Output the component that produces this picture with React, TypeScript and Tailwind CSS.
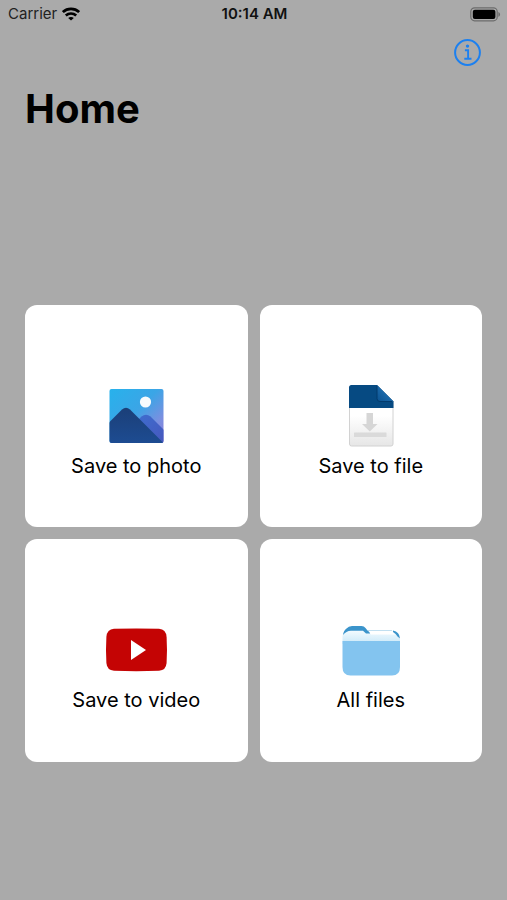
import React from 'react';

function WifiIcon() {
  return (
    <svg viewBox="0 0 18 14" className="w-[18px] h-[14px]" fill="none" stroke="#000" strokeWidth="2.7" aria-hidden="true">
      <path d="M0.9 5.1C5.4 0.9 12.6 0.9 17.1 5.1" />
      <path d="M3.8 8.5C6.8 5.8 11.2 5.8 14.2 8.5" />
      <path d="M9 13.6 6.2 10.9C7.7 9.6 10.3 9.6 11.8 10.9Z" fill="#000" stroke="none" />
    </svg>
  );
}

function BatteryIcon() {
  return (
    <svg viewBox="0 0 31 15" className="w-[31px] h-[15px]" aria-hidden="true">
      <rect x="0.8" y="0.8" width="26.4" height="13" rx="3.8" fill="none" stroke="#6c6c6c" strokeWidth="1.2" />
      <rect x="2.8" y="2.7" width="22.6" height="9.2" rx="2" fill="#000" />
      <path d="M28.4 4.9C30.6 5.7 30.6 8.9 28.4 9.7Z" fill="#6c6c6c" />
    </svg>
  );
}

function InfoIcon() {
  return (
    <svg viewBox="0 0 28 28" className="w-7 h-7" fill="none" stroke="#1c80f0" aria-hidden="true">
      <circle cx="13.5" cy="14.5" r="12.4" strokeWidth="2" />
      <circle cx="13.5" cy="8.1" r="1.7" fill="#1c80f0" stroke="none" />
      <path d="M10.9 12.2H14.1V20.8M10.3 20.8H17.5" strokeWidth="1.9" />
    </svg>
  );
}

function PhotoIcon() {
  return (
    <svg viewBox="0 0 64 64" className="w-16 h-16" aria-hidden="true">
      <defs>
        <linearGradient id="photo-sky" x1="0" y1="0" x2="1" y2="1">
          <stop offset="0" stopColor="#27b2ec" />
          <stop offset="0.45" stopColor="#3ba5e6" />
          <stop offset="0.75" stopColor="#7b8fe0" />
          <stop offset="1" stopColor="#8a7bd8" />
        </linearGradient>
        <linearGradient id="photo-back" x1="0" y1="0" x2="1" y2="1">
          <stop offset="0" stopColor="#3d6fd0" />
          <stop offset="1" stopColor="#4757bd" />
        </linearGradient>
        <linearGradient id="photo-front" x1="0" y1="0" x2="0" y2="1">
          <stop offset="0" stopColor="#1b3f78" />
          <stop offset="1" stopColor="#1d4c92" />
        </linearGradient>
        <clipPath id="photo-clip">
          <rect x="5.5" y="5" width="54" height="54" rx="2" />
        </clipPath>
      </defs>
      <g clipPath="url(#photo-clip)">
        <rect x="5" y="5" width="55" height="54" fill="url(#photo-sky)" />
        <path d="M28 42 37.5 32.6Q42 28.8 46.5 32.6L60 46V60H40Z" fill="url(#photo-back)" />
        <path d="M4 39.5 18 25.5Q22 22 26 25.5L60 59.5H4Z" fill="url(#photo-front)" />
        <circle cx="41.5" cy="18" r="5.6" fill="#f7fbfd" />
      </g>
    </svg>
  );
}

function FileIcon() {
  return (
    <svg viewBox="0 0 64 64" className="w-16 h-16" aria-hidden="true">
      <defs>
        <linearGradient id="file-page" x1="0" y1="0" x2="0" y2="1">
          <stop offset="0.5" stopColor="#ffffff" />
          <stop offset="1" stopColor="#e6e6e6" />
        </linearGradient>
        <linearGradient id="file-fold" x1="0" y1="1" x2="0.5" y2="0.5">
          <stop offset="0" stopColor="#0b5290" />
          <stop offset="1" stopColor="#1c69a9" />
        </linearGradient>
      </defs>
      <path d="M12.5 1.5H38L54 17V60Q54 62 52 62H12.5Q10.5 62 10.5 60V3.5Q10.5 1.5 12.5 1.5Z" fill="url(#file-page)" stroke="#d2d2d2" strokeWidth="1" />
      <path d="M12.5 1H38L54.5 17.5V24H10V3.5Q10 1 12.5 1Z" fill="#064a82" />
      <path d="M38 1 54.5 17.5H41Q38 17.5 38 14.5Z" fill="url(#file-fold)" />
      <path d="M38 2V14.5Q38 17.5 41 17.5H53" fill="none" stroke="#033b6c" strokeWidth="1" />
      <path d="M27.5 29H34V40H38.5L30.8 47.5 23 40H27.5Z" fill="#d6d6d6" />
      <rect x="15" y="48.5" width="32.5" height="4.5" rx="0.5" fill="#dadada" />
    </svg>
  );
}

function VideoIcon() {
  return (
    <svg viewBox="0 0 64 64" className="w-16 h-16" aria-hidden="true">
      <path d="M10 10.8Q32 10 55 10.8Q62 11.2 62.6 19Q63.4 32 62.6 45Q62 52.2 55 52.8Q32 53.6 10 52.8Q3 52.2 2.4 45Q1.6 32 2.4 19Q3 11.2 10 10.8Z" fill="#c40404" />
      <path d="M27 22V42L42 32Z" fill="#fff" />
    </svg>
  );
}

function FolderIcon() {
  return (
    <svg viewBox="0 0 64 64" className="w-16 h-16" aria-hidden="true">
      <defs>
        <linearGradient id="folder-paper" x1="0" y1="0" x2="0" y2="1">
          <stop offset="0" stopColor="#f4fbff" />
          <stop offset="1" stopColor="#c9e8f8" />
        </linearGradient>
      </defs>
      <path d="M3.5 26V18Q4 13.5 9 12.5H54Q60.5 13 61 21V26Z" fill="url(#folder-paper)" />
      <path d="M4 17Q4.5 12.5 7.5 10.5Q9.5 8 13 8H22.5Q25 8 26.5 10L28.5 12.5Q29.5 13.5 31 13.8V15.5H27L24 12.8H12Q7 13 4 17Z" fill="#3b94cb" />
      <path d="M29 12.6H53" stroke="#a9d2ea" strokeWidth="0.8" />
      <path d="M29.5 13H53L56.5 16.5H32Z" fill="#fff" />
      <path d="M54 12.6Q60.5 14 61 20.5L58.5 18.5Q57 15.5 54 14Z" fill="#3b94cb" />
      <path d="M3.5 23H61V49Q61 57.5 53 57.5H11.5Q3.5 57.5 3.5 49Z" fill="#83c4ef" />
    </svg>
  );
}

const actions = [
  { label: 'Save to photo', icon: <PhotoIcon /> },
  { label: 'Save to file', icon: <FileIcon /> },
  { label: 'Save to video', icon: <VideoIcon /> },
  { label: 'All files', icon: <FolderIcon /> },
];

export default function App() {
  return (
    <div className="min-h-screen flex flex-col bg-[#aaaaaa] text-black font-['Inter',sans-serif]">
      {/* Status bar */}
      <div className="grid grid-cols-3 items-center h-7 pl-2 pr-1.5 text-[15px] leading-5">
        <div className="flex items-center gap-[5px] text-[#222222]">
          Carrier
          <WifiIcon />
        </div>
        <div className="text-center font-semibold text-[#111111]">10:14 AM</div>
        <div className="flex justify-end">
          <BatteryIcon />
        </div>
      </div>

      {/* Navigation header */}
      <header className="px-[25px]">
        <div className="flex justify-end items-center h-12">
          <button type="button" aria-label="About" className="cursor-pointer">
            <InfoIcon />
          </button>
        </div>
        <h1 className="text-[40px] leading-[66px] font-bold">Home</h1>
      </header>

      {/* Actions */}
      <main className="grow flex flex-col justify-center px-[25px] pt-6">
        <div className="grid grid-cols-2 gap-3">
          {actions.map((action) => (
            <button
              key={action.label}
              type="button"
              className="aspect-square grid grid-rows-[1fr_auto_1fr] justify-items-center rounded-xl bg-white cursor-pointer"
            >
              <span className="row-start-2">{action.icon}</span>
              <span className="row-start-3 pt-1 text-xl leading-7">{action.label}</span>
            </button>
          ))}
        </div>
      </main>
    </div>
  );
}
